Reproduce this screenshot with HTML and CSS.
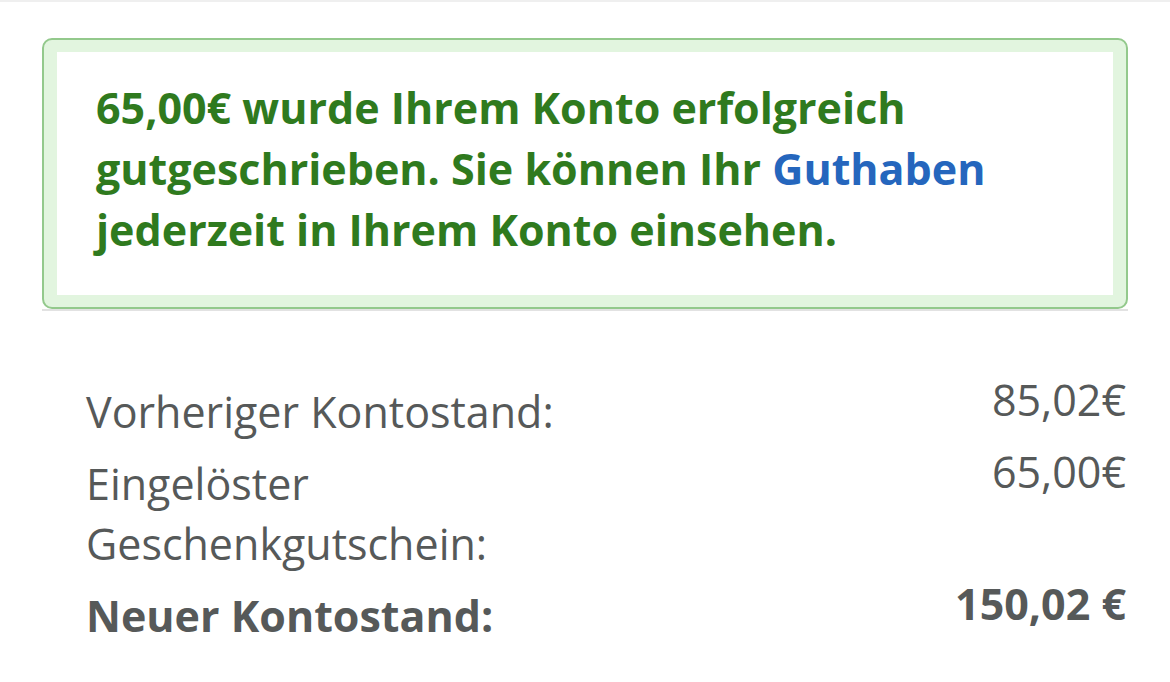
FILE: index.html
```html
<!DOCTYPE html>
<html lang="de">
<head>
    <meta charset="UTF-8">
    <meta name="viewport" content="width=device-width, initial-scale=1.0">
    <title>Guthaben</title>
    <link rel="stylesheet" href="styles.css">
</head>
<body>
    <div class="page">
        <div class="alert-wrap">
            <div class="alert">
                <div class="alert-inner">
                    <p>65,00€ wurde Ihrem Konto erfolgreich gutgeschrieben. Sie können Ihr <a href="#">Guthaben</a> jederzeit in Ihrem Konto einsehen.</p>
                </div>
            </div>
        </div>
        <div class="summary">
            <div class="row">
                <span class="label">Vorheriger Kontostand:</span>
                <span class="value">85,02€</span>
            </div>
            <div class="row">
                <span class="label">Eingelöster Geschenkgutschein:</span>
                <span class="value">65,00€</span>
            </div>
            <div class="row total">
                <span class="label">Neuer Kontostand:</span>
                <span class="value">150,02 €</span>
            </div>
        </div>
    </div>
</body>
</html>
```

FILE: styles.css
```css
body {
    margin: 0;
    font-family: "Open Sans", Arial, sans-serif;
    background-color: #fff;
    color: #565959;
}

.page {
    border-top: 2px solid #efefef;
    padding: 36px 42px 0 42px;
}

.alert-wrap {
    border-bottom: 2px solid #e2e2e2;
}

.alert {
    border: 2px solid #93c98c;
    border-radius: 10px;
    background-color: #e2f5df;
    padding: 12px 13px;
}

.alert-inner {
    background-color: #fff;
    padding: 25px 39px 35px 39px;
}

.alert p {
    margin: 0;
    font-size: 43px;
    line-height: 61px;
    font-weight: bold;
    color: #2f7a1e;
}

.alert a {
    color: #2566bd;
    text-decoration: none;
}

.summary {
    padding: 71px 2px 0 44px;
    display: flex;
    flex-direction: column;
    gap: 12px;
}

.row {
    display: flex;
    justify-content: space-between;
    align-items: flex-start;
    font-size: 43px;
    line-height: 60px;
}

.label {
    width: 50%;
}

.value {
    line-height: 36px;
}

.total {
    font-weight: bold;
}
```
